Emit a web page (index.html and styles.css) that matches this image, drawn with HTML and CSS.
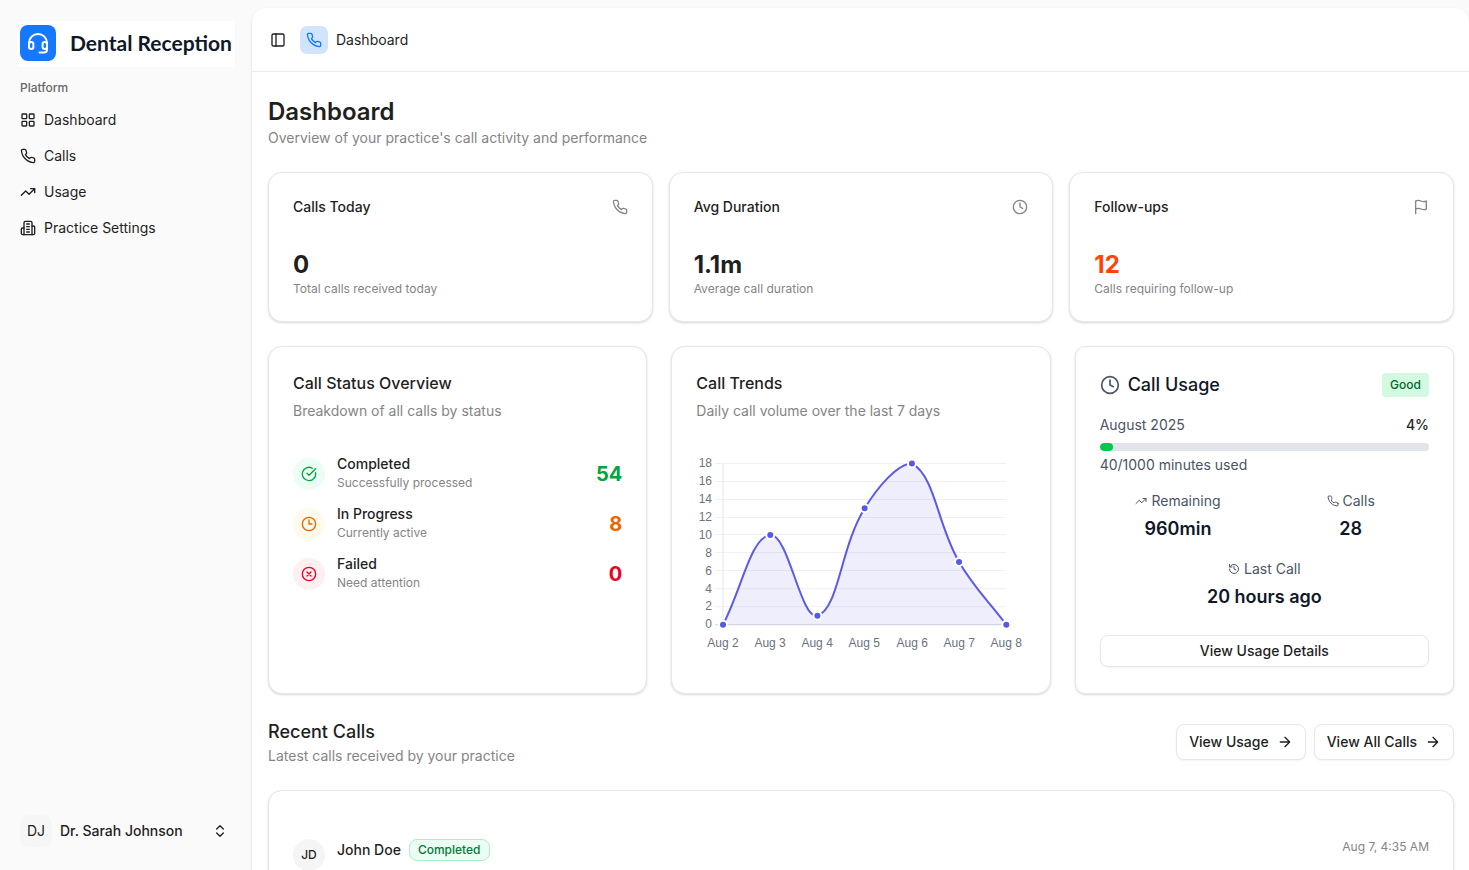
FILE: index.html
```html
<!DOCTYPE html>
<html lang="en">
<head>
<meta charset="utf-8">
<meta name="viewport" content="width=device-width, initial-scale=1">
<title>Dashboard - Dental Reception</title>
<link rel="stylesheet" href="styles.css">
</head>
<body>
<svg class="sprite" aria-hidden="true">
  <symbol id="phone" viewBox="0 0 24 24"><path d="M22 16.92v3a2 2 0 0 1-2.18 2 19.79 19.79 0 0 1-8.63-3.07 19.5 19.5 0 0 1-6-6 19.79 19.79 0 0 1-3.07-8.67A2 2 0 0 1 4.11 2h3a2 2 0 0 1 2 1.72 12.84 12.84 0 0 0 .7 2.81 2 2 0 0 1-.45 2.11L8.09 9.91a16 16 0 0 0 6 6l1.27-1.27a2 2 0 0 1 2.11-.45 12.84 12.84 0 0 0 2.81.7A2 2 0 0 1 22 16.92z"/></symbol>
  <symbol id="clock" viewBox="0 0 24 24"><circle cx="12" cy="12" r="10"/><path d="M12 6v6l4 2"/></symbol>
  <symbol id="clock-quarter" viewBox="0 0 24 24"><circle cx="12" cy="12" r="10"/><path d="M12 6v6h4.5"/></symbol>
  <symbol id="trend" viewBox="0 0 24 24"><path d="M22 7l-8.5 8.5-5-5L2 17"/><path d="M16 7h6v6"/></symbol>
  <symbol id="arrow" viewBox="0 0 24 24"><path d="M5 12h14M12 5l7 7-7 7"/></symbol>
</svg>
<div class="shell">
  <aside class="sidebar">
    <a class="brand" href="#">
      <svg class="brand-mark" viewBox="0 0 36 36" aria-hidden="true"><rect width="36" height="36" rx="8" fill="#1677ff"/><g fill="none" stroke="#fff" stroke-width="2" stroke-linecap="round" stroke-linejoin="round"><path d="M9 20v-2a9 9 0 0 1 18 0v2"/><rect x="9" y="17" width="4.400" height="7" rx="2.200"/><rect x="22.600" y="17" width="4.400" height="7" rx="2.200"/><path d="M27 21v3.500a3 3 0 0 1-3 3h-4.500"/></g></svg>
      <span>Dental Reception</span>
    </a>
    <h2 class="group-label">Platform</h2>
    <nav class="nav">
      <a href="#"><svg class="icon" viewBox="0 0 24 24"><rect x="3" y="3" width="7" height="7" rx="1"/><rect x="14" y="3" width="7" height="7" rx="1"/><rect x="14" y="14" width="7" height="7" rx="1"/><rect x="3" y="14" width="7" height="7" rx="1"/></svg>Dashboard</a>
      <a href="#"><svg class="icon"><use href="#phone"/></svg>Calls</a>
      <a href="#"><svg class="icon"><use href="#trend"/></svg>Usage</a>
      <a href="#"><svg class="icon" viewBox="0 0 24 24"><path d="M6 22V4a2 2 0 0 1 2-2h8a2 2 0 0 1 2 2v18Z"/><path d="M6 12H4a2 2 0 0 0-2 2v6a2 2 0 0 0 2 2h2"/><path d="M18 9h2a2 2 0 0 1 2 2v9a2 2 0 0 1-2 2h-2"/><path d="M10 6h4M10 10h4M10 14h4M10 18h4"/></svg>Practice Settings</a>
    </nav>
    <button class="user" type="button">
      <span class="user-initials">DJ</span>
      <span class="user-name">Dr. Sarah Johnson</span>
      <svg class="icon" viewBox="0 0 24 24"><path d="m7 15 5 5 5-5M7 9l5-5 5 5"/></svg>
    </button>
  </aside>

  <main class="panel">
    <header class="topbar">
      <button class="toggle" type="button" aria-label="Toggle sidebar"><svg class="icon" viewBox="0 0 24 24"><rect x="3" y="3" width="18" height="18" rx="2"/><path d="M9 3v18"/></svg></button>
      <span class="crumb-icon"><svg class="icon"><use href="#phone"/></svg></span>
      <span>Dashboard</span>
    </header>

    <div class="content">
      <div>
        <h1 class="page-title">Dashboard</h1>
        <p class="muted">Overview of your practice's call activity and performance</p>
      </div>

      <section class="stats">
        <article class="card">
          <div class="stat-head"><h2>Calls Today</h2><svg class="icon"><use href="#phone"/></svg></div>
          <p class="stat-value">0</p>
          <p class="small">Total calls received today</p>
        </article>
        <article class="card">
          <div class="stat-head"><h2>Avg Duration</h2><svg class="icon"><use href="#clock"/></svg></div>
          <p class="stat-value">1.1m</p>
          <p class="small">Average call duration</p>
        </article>
        <article class="card">
          <div class="stat-head"><h2>Follow-ups</h2><svg class="icon" viewBox="0 0 24 24"><path d="M4 15s1-1 4-1 5 2 8 2 4-1 4-1V3s-1 1-4 1-5-2-8-2-4 1-4 1zM4 22v-7"/></svg></div>
          <p class="stat-value alert">12</p>
          <p class="small">Calls requiring follow-up</p>
        </article>
      </section>

      <section class="overview">
        <article class="card">
          <h2 class="card-title">Call Status Overview</h2>
          <p class="muted">Breakdown of all calls by status</p>
          <ul class="statuses">
            <li class="done">
              <span class="status-icon"><svg class="icon" viewBox="0 0 24 24"><path d="M21.800 10A10 10 0 1 1 17 3.335"/><path d="m9 11 3 3L22 4"/></svg></span>
              <div class="status-text"><h3>Completed</h3><p class="small">Successfully processed</p></div>
              <strong>54</strong>
            </li>
            <li class="active">
              <span class="status-icon"><svg class="icon"><use href="#clock-quarter"/></svg></span>
              <div class="status-text"><h3>In Progress</h3><p class="small">Currently active</p></div>
              <strong>8</strong>
            </li>
            <li class="failed">
              <span class="status-icon"><svg class="icon" viewBox="0 0 24 24"><circle cx="12" cy="12" r="10"/><path d="m15 9-6 6M9 9l6 6"/></svg></span>
              <div class="status-text"><h3>Failed</h3><p class="small">Need attention</p></div>
              <strong>0</strong>
            </li>
          </ul>
        </article>

        <article class="card">
          <h2 class="card-title">Call Trends</h2>
          <p class="muted">Daily call volume over the last 7 days</p>
          <svg class="chart" viewBox="0 0 329 224" role="img" aria-label="Calls per day, Aug 2 to Aug 8">
            <path class="grid" d="M19 18.500H310M19 36.500H310M19 54.500H310M19 72.500H310M19 89.500H310M19 107.500H310M19 125.500H310M19 143.500H310M19 161.500H310"/>
            <path class="axis" d="M27 18V179"/>
            <path class="base" d="M19 179.500H310"/>
            <path class="area" d="M27 179.500C45.900 143.700 54.600 91.900 74.200 90C92.300 88.300 104.600 175.200 121.300 170.500C142.300 164.500 144.200 102.300 168.500 63.200C182 41.400 201.600 18.400 215.700 18.400C239.300 31.800 240.800 79.300 262.800 116.800C278.600 143.700 291.100 154.400 310 179.500Z"/>
            <path class="line" d="M27 179.500C45.900 143.700 54.600 91.900 74.200 90C92.300 88.300 104.600 175.200 121.300 170.500C142.300 164.500 144.200 102.300 168.500 63.200C182 41.400 201.600 18.400 215.700 18.400C239.300 31.800 240.800 79.300 262.800 116.800C278.600 143.700 291.100 154.400 310 179.500"/>
            <g class="dots"><circle cx="27" cy="179.500" r="4"/><circle cx="74.200" cy="90" r="4"/><circle cx="121.300" cy="170.500" r="4"/><circle cx="168.500" cy="63.200" r="4"/><circle cx="215.700" cy="18.400" r="4"/><circle cx="262.800" cy="116.800" r="4"/><circle cx="310" cy="179.500" r="4"/></g>
            <g class="y-ticks"><text x="16" y="22">18</text><text x="16" y="40">16</text><text x="16" y="58">14</text><text x="16" y="76">12</text><text x="16" y="94">10</text><text x="16" y="112">8</text><text x="16" y="130">6</text><text x="16" y="148">4</text><text x="16" y="165">2</text><text x="16" y="183">0</text></g>
            <g class="x-ticks"><text x="27" y="202">Aug 2</text><text x="74" y="202">Aug 3</text><text x="121" y="202">Aug 4</text><text x="168" y="202">Aug 5</text><text x="216" y="202">Aug 6</text><text x="263" y="202">Aug 7</text><text x="310" y="202">Aug 8</text></g>
          </svg>
        </article>

        <article class="card usage">
          <div class="usage-head">
            <svg class="icon"><use href="#clock"/></svg>
            <h2>Call Usage</h2>
            <span class="tag">Good</span>
          </div>
          <div class="usage-row"><label for="minutes">August 2025</label><strong>4%</strong></div>
          <progress id="minutes" value="40" max="1000">4%</progress>
          <p>40/1000 minutes used</p>
          <dl class="figures">
            <div><dt><svg class="icon"><use href="#trend"/></svg>Remaining</dt><dd>960min</dd></div>
            <div><dt><svg class="icon"><use href="#phone"/></svg>Calls</dt><dd>28</dd></div>
            <div class="wide"><dt><svg class="icon" viewBox="0 0 24 24"><path d="M3 12a9 9 0 1 0 9-9 9.750 9.750 0 0 0-6.740 2.740L3 8"/><path d="M3 3v5h5M12 7v5l4 2"/></svg>Last Call</dt><dd>20 hours ago</dd></div>
          </dl>
          <button class="btn btn-block" type="button">View Usage Details</button>
        </article>
      </section>

      <section class="recent">
        <div class="recent-head">
          <div>
            <h2>Recent Calls</h2>
            <p class="muted">Latest calls received by your practice</p>
          </div>
          <button class="btn" type="button">View Usage <svg class="icon"><use href="#arrow"/></svg></button>
          <button class="btn" type="button">View All Calls <svg class="icon"><use href="#arrow"/></svg></button>
        </div>
        <div class="card calls">
          <article class="call">
            <span class="avatar">JD</span>
            <h3>John Doe</h3>
            <span class="pill">Completed</span>
            <time class="small" datetime="2025-08-07T04:35">Aug 7, 4:35 AM</time>
          </article>
        </div>
      </section>
    </div>
  </main>
</div>
</body>
</html>
```
FILE: styles.css
```css
* { box-sizing: border-box; }

body {
  margin: 0;
  background: #fafafa;
  color: #1f1f1f;
  font: 14px/20px Inter, "Liberation Sans", sans-serif;
}

h1, h2, h3, p, ul, dl, dd { margin: 0; padding: 0; }
h1, h2, h3 { font-size: 14px; font-weight: 500; }
a { color: inherit; text-decoration: none; }
button { font: inherit; color: inherit; background: none; border: 0; padding: 0; cursor: pointer; }

.sprite { display: none; }

.icon {
  width: 16px;
  height: 16px;
  flex: none;
  fill: none;
  stroke: currentColor;
  stroke-width: 2;
  stroke-linecap: round;
  stroke-linejoin: round;
}

.muted { color: #858585; }
.small { font-size: 12px; line-height: 16px; color: #858585; }

.shell { display: flex; height: 100vh; overflow: hidden; }

/* Sidebar */
.sidebar {
  display: flex;
  flex-direction: column;
  flex: none;
  width: 252px;
  padding: 21px 17px 16px;
}

.brand {
  display: flex;
  align-items: center;
  gap: 14px;
  height: 46px;
  padding: 0 3px 2px;
  background: #fff;
  color: #101828;
  font-family: Lato, Inter, sans-serif;
  font-size: 21px;
  font-weight: 700;
  white-space: nowrap;
}

.brand-mark { width: 36px; height: 36px; flex: none; }

.group-label {
  padding: 12px 3px 8px;
  color: #686868;
  font-size: 12px;
  line-height: 17px;
}

.nav { display: flex; flex-direction: column; gap: 4px; }
.nav a { display: flex; align-items: center; gap: 8px; height: 32px; padding: 0 3px; }

.user {
  display: flex;
  align-items: center;
  gap: 8px;
  margin-top: auto;
  padding: 7px 7px 7px 3px;
  text-align: left;
}

.user-initials {
  display: grid;
  place-items: center;
  width: 32px;
  height: 32px;
  border-radius: 8px;
  background: #f6f6f6;
}

.user-name { flex: 1; font-weight: 500; }

/* Main panel */
.panel {
  flex: 1;
  min-width: 0;
  margin-top: 8px;
  overflow: hidden;
  border-radius: 14px 14px 0 0;
  background: #fff;
  box-shadow: 0 1px 3px rgba(0, 0, 0, 0.12);
}

.topbar {
  display: flex;
  align-items: center;
  gap: 8px;
  height: 64px;
  padding: 0 16px;
  border-bottom: 1px solid #ebebeb;
}

.toggle { display: grid; place-items: center; width: 20px; height: 28px; margin-right: 4px; }

.crumb-icon {
  display: grid;
  place-items: center;
  width: 28px;
  height: 28px;
  border-radius: 7px;
  background: #d0e4fd;
  color: #1677ff;
}

.content { display: flex; flex-direction: column; gap: 24px; padding: 24px 15px 24px 16px; }
.page-title { font-size: 24px; line-height: 32px; font-weight: 600; }

.card {
  padding: 24px;
  border: 1px solid #e7e7e7;
  border-radius: 14px;
  background: #fff;
  box-shadow: 0 1px 3px rgba(0, 0, 0, 0.1), 0 1px 2px rgba(0, 0, 0, 0.06);
}

.card-title { margin-bottom: 6px; font-size: 16px; line-height: 24px; }

/* Stat cards */
.stats { display: grid; grid-template-columns: repeat(3, 1fr); gap: 16px; }
.stat-head { display: flex; justify-content: space-between; align-items: center; margin-bottom: 32px; }
.stat-head .icon { color: #858585; }
.stat-value { font-size: 24px; line-height: 32px; font-weight: 700; }
.alert { color: #ff4405; }

/* Overview cards */
.overview { display: grid; grid-template-columns: repeat(3, 1fr); gap: 24px; }

.statuses { display: flex; flex-direction: column; gap: 10px; margin-top: 33px; list-style: none; }
.statuses li { display: flex; align-items: center; gap: 12px; height: 40px; }
.status-icon { display: grid; place-items: center; width: 32px; height: 32px; border-radius: 50%; }
.status-text { display: grid; flex: 1; gap: 1px; padding-bottom: 3px; }
.statuses strong { font-size: 20px; line-height: 28px; font-weight: 700; }
.done .status-icon { background: #ecfdf3; }
.done .icon, .done strong { color: #00a63e; }
.active .status-icon { background: #fffaeb; }
.active .icon, .active strong { color: #e86800; }
.failed .status-icon { background: #fef0f0; }
.failed .icon, .failed strong { color: #ec0024; }

.chart { display: block; width: 100%; margin-top: 24px; }
.chart text { fill: #6b7280; font: 12px "Liberation Sans", Arial, sans-serif; }
.y-ticks { text-anchor: end; }
.x-ticks { text-anchor: middle; }
.grid { stroke: #f1f1f4; }
.axis { stroke: #e5e5e8; }
.base { stroke: #d3d3da; }
.area { fill: rgba(91, 91, 230, 0.1); }
.line { fill: none; stroke: #5b5be6; stroke-width: 2; }
.dots { fill: #5558e8; stroke: #fff; stroke-width: 2; }

.usage { display: flex; flex-direction: column; border-radius: 10px; color: #4a5565; }
.usage-head { display: flex; align-items: center; gap: 8px; height: 28px; }
.usage-head .icon { width: 20px; height: 20px; }
.usage-head h2 { flex: 1; color: #101828; font-size: 18px; line-height: 28px; }

.tag {
  padding: 4px 8px;
  border-radius: 4px;
  background: #d3fae1;
  color: #016630;
  font-size: 12px;
  line-height: 16px;
  font-weight: 500;
}

.usage-row { display: flex; justify-content: space-between; margin-top: 16px; }
.usage-row strong { color: #1f1f1f; font-weight: 500; }

progress {
  display: block;
  width: 100%;
  height: 8px;
  margin: 8px 0 4px;
  border: 0;
  border-radius: 4px;
  overflow: hidden;
  appearance: none;
  background: #e1e4e9;
}
progress::-webkit-progress-bar { background: #e1e4e9; border-radius: 4px; }
progress::-webkit-progress-value { background: #00c950; border-radius: 4px; }
progress::-moz-progress-bar { background: #00c950; border-radius: 4px; }

.figures { display: grid; grid-template-columns: 1fr 1fr; gap: 16px; margin: 16px 0 24px; text-align: center; }
.figures .wide { grid-column: span 2; }
.figures dt { display: flex; align-items: center; justify-content: center; gap: 4px; margin-bottom: 4px; }
.figures .icon { width: 12px; height: 12px; }
.figures dd { color: #101828; font-size: 18px; line-height: 28px; font-weight: 600; }

.btn {
  display: flex;
  align-items: center;
  justify-content: center;
  gap: 8px;
  height: 36px;
  padding: 0 12px;
  border: 1px solid #e7e7e7;
  border-radius: 8px;
  background: #fff;
  box-shadow: 0 1px 2px rgba(0, 0, 0, 0.05);
  color: #1f1f1f;
  font-weight: 500;
}
.btn-block { width: 100%; height: 32px; }

/* Recent calls */
.recent { display: flex; flex-direction: column; gap: 24px; }
.recent-head { display: flex; align-items: center; gap: 8px; }
.recent-head div { flex: 1; }
.recent-head h2 { font-size: 18px; line-height: 28px; }
.calls { padding: 48px 24px; }
.call { display: flex; align-items: flex-start; gap: 8px; }
.call h3 { line-height: 22px; }
.call time { margin-left: auto; }

.avatar {
  display: grid;
  place-items: center;
  width: 32px;
  height: 32px;
  margin-right: 4px;
  border-radius: 50%;
  background: #f5f5f5;
  font-size: 12px;
  font-weight: 500;
}

.pill {
  padding: 2px 8px;
  border: 1px solid #a9f0c4;
  border-radius: 8px;
  background: #ecfdf3;
  color: #007a38;
  font-size: 12px;
  line-height: 16px;
  font-weight: 500;
}
```
